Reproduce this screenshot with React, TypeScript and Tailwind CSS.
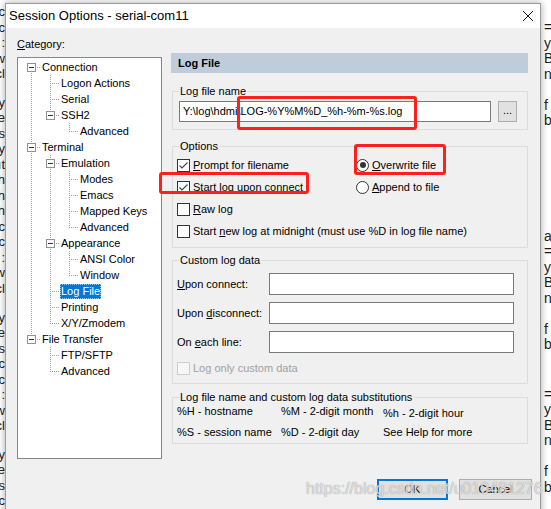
import React from 'react';

type Row = { t: string; d: number; exp?: boolean; next: boolean; g: boolean[]; sel?: boolean; first?: boolean };

const rows: Row[] = [
    { t: 'Connection', d: 0, exp: true, next: true, g: [], first: true },
    { t: 'Logon Actions', d: 1, next: true, g: [true] },
    { t: 'Serial', d: 1, next: true, g: [true] },
    { t: 'SSH2', d: 1, exp: true, next: false, g: [true] },
    { t: 'Advanced', d: 2, next: false, g: [true, false] },
    { t: 'Terminal', d: 0, exp: true, next: true, g: [] },
    { t: 'Emulation', d: 1, exp: true, next: true, g: [true] },
    { t: 'Modes', d: 2, next: true, g: [true, true] },
    { t: 'Emacs', d: 2, next: true, g: [true, true] },
    { t: 'Mapped Keys', d: 2, next: true, g: [true, true] },
    { t: 'Advanced', d: 2, next: false, g: [true, true] },
    { t: 'Appearance', d: 1, exp: true, next: true, g: [true] },
    { t: 'ANSI Color', d: 2, next: true, g: [true, true] },
    { t: 'Window', d: 2, next: false, g: [true, true] },
    { t: 'Log File', d: 1, next: true, g: [true], sel: true },
    { t: 'Printing', d: 1, next: true, g: [true] },
    { t: 'X/Y/Zmodem', d: 1, next: false, g: [true] },
    { t: 'File Transfer', d: 0, exp: true, next: false, g: [] },
    { t: 'FTP/SFTP', d: 1, next: true, g: [false] },
    { t: 'Advanced', d: 1, next: false, g: [false] },
];

const leftLines = ['ı.c', 'doc', ':', 'ow', 'cl', '', 'uy', 'e', 'ıs', 'ly', 'ıt', 'th', 'th', 'th', 'ıc', 'doc', ':', 'ow', 'cl', '', 'uy', 'e', 'ıs', 'ıc', 'doc', ':', 'ow', 'cl', '', 'uy', 'e', 'ıs', 'ıc'];

const dot = { stroke: '#a0a0a0', strokeDasharray: '1 1', shapeRendering: 'crispEdges' as const };

function TreeCell({ row }: { row: Row }) {
    const top = !row.first;
    return (
        <svg width="19" height="16" className="block shrink-0">
            {top && <line x1="9.5" y1="0" x2="9.5" y2="8" {...dot} />}
            {row.next && <line x1="9.5" y1="8" x2="9.5" y2="16" {...dot} />}
            <line x1="9" y1="8.5" x2="19" y2="8.5" {...dot} />
            {row.exp && (
                <>
                    <rect x="5.5" y="4.5" width="8" height="8" fill="white" stroke="#919191" shapeRendering="crispEdges" />
                    <line x1="7" y1="8.5" x2="12" y2="8.5" stroke="#333" shapeRendering="crispEdges" />
                </>
            )}
        </svg>
    );
}

function Check({ checked, disabled }: { checked?: boolean; disabled?: boolean }) {
    return (
        <span
            className={
                disabled
                    ? 'flex h-[13px] w-[13px] shrink-0 border border-[#cccccc] bg-[#f7f7f7]'
                    : 'flex h-[13px] w-[13px] shrink-0 items-center justify-center border border-[#333333] bg-white'
            }
        >
            {checked && (
                <svg width="11" height="11" viewBox="0 0 11 11">
                    <path d="M1.5 5.5 L4 8 L9.5 2.5" fill="none" stroke="#444" strokeWidth="1.1" />
                </svg>
            )}
        </span>
    );
}

function Radio({ checked }: { checked?: boolean }) {
    return (
        <span className="flex h-[13px] w-[13px] shrink-0 items-center justify-center rounded-full border border-[#333333] bg-white">
            {checked && <span className="h-[6px] w-[6px] rounded-full bg-[#333333]" />}
        </span>
    );
}

function Group({ title, className, children }: { title: string; className: string; children: React.ReactNode }) {
    return (
        <fieldset className={`ml-[1px] w-[356px] border border-[#dcdcdc] ${className}`}>
            <legend className="ml-[6px] px-[1px] leading-[16px]">{title}</legend>
            {children}
        </fieldset>
    );
}

function Field() {
    return <div className="h-[22px] w-[245px] border border-[#7a7a7a] bg-white" />;
}

export default function App() {
    return (
        <div className="relative flex h-[509px] w-[551px] overflow-hidden bg-white font-['Liberation_Sans',Arial,sans-serif] text-[11px] text-black">
            {/* window behind, left edge */}
            <div className="flex w-[5px] shrink-0 flex-col overflow-hidden pt-[4px] text-[13px] leading-[15.5px] text-[#222]">
                {leftLines.map((l, i) => (
                    <div key={i} className="flex h-[15.5px] justify-end whitespace-nowrap">
                        {l}
                    </div>
                ))}
            </div>

            <div className="mt-[3px] flex h-[520px] w-[536px] shrink-0 flex-col border border-[#9b9b9b] bg-[#f0f0f0] shadow-[0_0_7px_rgba(0,0,0,0.35)]">
                <div className="flex h-[24px] items-center justify-between bg-white pl-[3px] pr-[7px] text-[13px]">
                    <span>Session Options - serial-com11</span>
                    <svg width="10" height="10" viewBox="0 0 10 10">
                        <path d="M0 0 L10 10 M10 0 L0 10" stroke="#111" strokeWidth="1" />
                    </svg>
                </div>

                <div className="flex pl-[11px]">
                    <div className="flex w-[145px] flex-col">
                        <div className="mt-[8px] h-[16px] leading-[16px]">
                            <u>C</u>ategory:
                        </div>
                        <div className="mt-[5px] h-[402px] border border-[#828790] bg-white pl-[4px] pt-[1px]">
                            {rows.map((r, i) => (
                                <div key={i} className="flex h-[16px] items-center">
                                    {r.g.map((on, k) =>
                                        on ? (
                                            <svg key={k} width="19" height="16" className="block shrink-0">
                                                <line x1="9.5" y1="0" x2="9.5" y2="16" {...dot} />
                                            </svg>
                                        ) : (
                                            <div key={k} className="w-[19px] shrink-0" />
                                        )
                                    )}
                                    <TreeCell row={r} />
                                    <span
                                        className={
                                            r.sel
                                                ? 'h-[15px] bg-[#0078d7] px-[1px] leading-[15px] whitespace-nowrap text-white outline-1 -outline-offset-1 outline-dotted outline-[#9cc8ee]'
                                                : 'h-[15px] px-[1px] leading-[15px] whitespace-nowrap'
                                        }
                                    >
                                        {r.t}
                                    </span>
                                </div>
                            ))}
                        </div>
                    </div>

                    <div className="ml-[9px] flex w-[357px] flex-col pt-[25px]">
                        <div className="h-[20px] bg-[#bfcddb] pl-[7px] font-bold leading-[20px]">Log File</div>

                        <Group title="Log file name" className="mt-[10px] pb-[7px]">
                            <div className="mt-[2px] flex items-center gap-[7px] pl-[6px]">
                                <div className="flex h-[21px] w-[312px] items-center border border-[#7a7a7a] bg-white pl-[3px]">
                                    {'Y:\\log\\hdmi\\LOG-%Y%M%D_%h-%m-%s.log'}
                                </div>
                                <div className="flex h-[21px] w-[19px] items-center justify-center border border-[#adadad] bg-[#e1e1e1] pb-[3px]">
                                    ...
                                </div>
                            </div>
                        </Group>

                        <Group title="Options" className="mt-[8px] pb-[5px]">
                            <div className="flex flex-col pl-[4px]">
                                <div className="flex h-[22px] items-center">
                                    <div className="flex w-[179px] items-center gap-[3px]">
                                        <Check checked />
                                        <span>
                                            <u>P</u>rompt for filename
                                        </span>
                                    </div>
                                    <div className="flex items-center gap-[3px]">
                                        <Radio checked />
                                        <span>
                                            <u>O</u>verwrite file
                                        </span>
                                    </div>
                                </div>
                                <div className="flex h-[22px] items-center">
                                    <div className="flex w-[179px] items-center gap-[3px]">
                                        <Check checked />
                                        <span>
                                            <u>S</u>tart log upon connect
                                        </span>
                                    </div>
                                    <div className="flex items-center gap-[3px]">
                                        <Radio />
                                        <span>
                                            <u>A</u>ppend to file
                                        </span>
                                    </div>
                                </div>
                                <div className="flex h-[22px] items-center gap-[3px]">
                                    <Check />
                                    <span>
                                        <u>R</u>aw log
                                    </span>
                                </div>
                                <div className="flex h-[22px] items-center gap-[3px]">
                                    <Check />
                                    <span>
                                        Start <u>n</u>ew log at midnight (must use %D in log file name)
                                    </span>
                                </div>
                            </div>
                        </Group>

                        <Group title="Custom log data" className="mt-[4px] pb-[5px]">
                            <div className="mt-[5px] flex flex-col gap-[7px] pl-[4px]">
                                <div className="flex items-center">
                                    <span className="w-[92px]">
                                        <u>U</u>pon connect:
                                    </span>
                                    <Field />
                                </div>
                                <div className="flex items-center">
                                    <span className="w-[92px]">
                                        Upon <u>d</u>isconnect:
                                    </span>
                                    <Field />
                                </div>
                                <div className="flex items-center">
                                    <span className="w-[92px]">
                                        On <u>e</u>ach line:
                                    </span>
                                    <Field />
                                </div>
                            </div>
                            <div className="mt-[5px] flex h-[20px] items-center gap-[3px] pl-[4px] text-[#a0a0a0]">
                                <Check disabled />
                                <span>
                                    Lo<u>g</u> only custom data
                                </span>
                            </div>
                        </Group>

                        <Group title="Log file name and custom log data substitutions" className="mt-[5px] pb-[3px]">
                            <div className="-mt-[2px] grid grid-cols-[104px_102px_1fr] gap-y-[5px] pl-[4px] leading-[16px]">
                                <span>%H - hostname</span>
                                <span>%M - 2-digit month</span>
                                <span className="translate-y-[2px]">%h - 2-digit hour</span>
                                <span>%S - session name</span>
                                <span>%D - 2-digit day</span>
                                <span>See Help for more</span>
                            </div>
                        </Group>
                    </div>
                </div>

                <div className="mt-[20px] flex justify-end gap-[11px] pr-[8px]">
                    <div className="flex h-[21px] w-[71px] items-center justify-center border-2 border-[#0078d7] bg-[#e1e1e1]">OK</div>
                    <div className="flex h-[21px] w-[73px] items-center justify-center border border-[#adadad] bg-[#e1e1e1]">Cancel</div>
                </div>
            </div>

            {/* window behind, right edge */}
            <div className="flex flex-1 flex-col pl-[3px] text-[14px] leading-[15.5px] text-[#1a1a1a]">
                <div className="mt-[20px] flex flex-col">
                    <span className="h-[15.5px]">=</span>
                    <span className="h-[15.5px]">y</span>
                    <span className="h-[15.5px]">B</span>
                    <span className="h-[15.5px]">n</span>
                    <span className="h-[15.5px]" />
                    <span className="h-[15.5px]">f</span>
                    <span className="h-[15.5px]">b</span>
                </div>
                <div className="mt-[100px] flex flex-col">
                    <span className="h-[15.5px]">a</span>
                    <span className="h-[15.5px]">=</span>
                    <span className="h-[15.5px]">y</span>
                    <span className="h-[15.5px]">B</span>
                    <span className="h-[15.5px]">n</span>
                    <span className="h-[15.5px]" />
                    <span className="h-[15.5px]">f</span>
                    <span className="h-[15.5px]">b</span>
                </div>
                <div className="mt-[34px] flex flex-col">
                    <span className="h-[15.5px]">=</span>
                    <span className="h-[15.5px]">y</span>
                    <span className="h-[15.5px]">B</span>
                    <span className="h-[15.5px]">n</span>
                    <span className="h-[15.5px]" />
                    <span className="h-[15.5px]">f</span>
                    <span className="h-[15.5px]">b</span>
                </div>
            </div>

            {/* annotations drawn over the screenshot */}
            <div className="absolute left-[237px] top-[96px] h-[34px] w-[180px] rounded-[3px] border-[3px] border-[#ff1f1f]" />
            <div className="absolute left-[354px] top-[144px] h-[31px] w-[92px] rounded-[3px] border-[3px] border-[#ff1f1f]" />
            <div className="absolute left-[159px] top-[172px] h-[22px] w-[150px] rounded-[3px] border-[3px] border-[#ff1f1f]" />
            <div className="absolute left-[306px] top-[480px] text-[16px] leading-[18px] whitespace-nowrap text-[rgba(235,235,235,0.85)] [text-shadow:0_0_1px_rgba(90,90,90,0.7)]">
                https://blog.csdn.net/u010481276
            </div>
        </div>
    );
}
